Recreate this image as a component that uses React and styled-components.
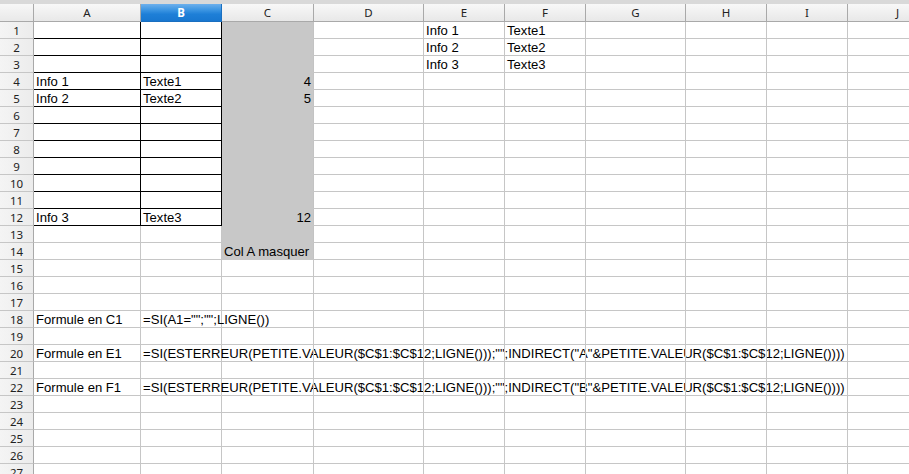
import React from "react";
import styled, { createGlobalStyle, css } from "styled-components";

const GlobalStyle = createGlobalStyle`
  html, body {
    margin: 0;
    padding: 0;
    background: #ffffff;
    overflow: hidden;
  }
  body {
    font-family: "Liberation Sans", Arial, sans-serif;
  }
`;

const Window = styled.div`
  width: 909px;
  height: 474px;
  overflow: hidden;
  background: #ffffff;
`;

const TopStrip = styled.div`
  height: 4px;
  background: #d9d9d9;
`;

const Grid = styled.div`
  display: grid;
  grid-template-columns: 34px 107px 81px 92px 110px 81px 81px 100px 81px 81px 100px;
  grid-template-rows: 18px;
  grid-auto-rows: 17px;
  width: max-content;
`;

const Corner = styled.div`
  box-sizing: border-box;
  background: linear-gradient(#f7f7f7, #e9e9e9);
  border-right: 1px solid #a9a9a9;
  border-bottom: 1px solid #a9a9a9;
`;

const ColHeader = styled.div`
  box-sizing: border-box;
  display: flex;
  align-items: center;
  justify-content: center;
  font-family: "Noto Sans", "Open Sans", sans-serif;
  font-size: 11.5px;
  color: #222;
  background: linear-gradient(#f8f8f8, #e8e8e8);
  border-right: 1px solid #a9a9a9;
  border-bottom: 1px solid #a9a9a9;
  ${(p) =>
    p.$selected &&
    css`
      color: #ffffff;
      font-weight: 700;
      background: linear-gradient(#6db0ec 0%, #3c95e2 35%, #1e7fd7 60%, #1877d0 100%);
      border-right-color: #1a6fc0;
      border-bottom-color: #1a6fc0;
    `}
`;

const RowHeader = styled.div`
  box-sizing: border-box;
  display: flex;
  align-items: center;
  justify-content: center;
  font-family: "Noto Sans", "Open Sans", sans-serif;
  font-size: 11.5px;
  color: #222;
  background: linear-gradient(90deg, #f4f4f4, #ececec);
  border-right: 1px solid #a9a9a9;
  border-bottom: 1px solid #c6c6c6;
`;

const Cell = styled.div`
  box-sizing: border-box;
  min-width: 0;
  padding: 1px 2px 0 2px;
  font-size: 13.1px;
  line-height: 16px;
  color: #000;
  white-space: nowrap;
  overflow: visible;
  text-align: ${(p) => (p.$align === "right" ? "right" : "left")};
  background: ${(p) => (p.$shade ? "#c8c8c8" : "transparent")};
  border-right: 1px solid ${(p) => (p.$boxed ? "#000" : p.$shade ? "#c3c3c3" : "#c6c6c6")};
  border-bottom: 1px solid ${(p) => (p.$boxed ? "#000" : p.$shade ? "#c8c8c8" : "#c6c6c6")};
  ${(p) =>
    p.$align === "right" &&
    css`
      direction: rtl;
      unicode-bidi: plaintext;
    `}
`;

const COLS = ["A", "B", "C", "D", "E", "F", "G", "H", "I", "J"];
const ROWS = 27;

const F1 =
  '=SI(ESTERREUR(PETITE.VALEUR($C$1:$C$12;LIGNE()));"";INDIRECT("A"&PETITE.VALEUR($C$1:$C$12;LIGNE())))';
const F2 =
  '=SI(ESTERREUR(PETITE.VALEUR($C$1:$C$12;LIGNE()));"";INDIRECT("B"&PETITE.VALEUR($C$1:$C$12;LIGNE())))';

const data = {
  E1: "Info 1",
  F1: "Texte1",
  E2: "Info 2",
  F2: "Texte2",
  E3: "Info 3",
  F3: "Texte3",
  A4: "Info 1",
  B4: "Texte1",
  C4: 4,
  A5: "Info 2",
  B5: "Texte2",
  C5: 5,
  A12: "Info 3",
  B12: "Texte3",
  C12: 12,
  C14: "Col A masquer",
  A18: "Formule en C1",
  B18: '=SI(A1="";"";LIGNE())',
  A20: "Formule en E1",
  B20: F1,
  A22: "Formule en F1",
  B22: F2,
};

export default function App() {
  const rows = [];
  for (let r = 1; r <= ROWS; r++) {
    rows.push(<RowHeader key={`h${r}`}>{r}</RowHeader>);
    COLS.forEach((c) => {
      const v = data[`${c}${r}`];
      const boxed = (c === "A" || c === "B") && r <= 12;
      const shade = c === "C" && r <= 14;
      rows.push(
        <Cell
          key={`${c}${r}`}
          $boxed={boxed}
          $shade={shade}
          $align={typeof v === "number" ? "right" : "left"}
        >
          {v !== undefined ? String(v) : ""}
        </Cell>
      );
    });
  }
  return (
    <Window>
      <GlobalStyle />
      <TopStrip />
      <Grid>
        <Corner />
        {COLS.map((c) => (
          <ColHeader key={c} $selected={c === "B"}>
            {c}
          </ColHeader>
        ))}
        {rows}
      </Grid>
    </Window>
  );
}
